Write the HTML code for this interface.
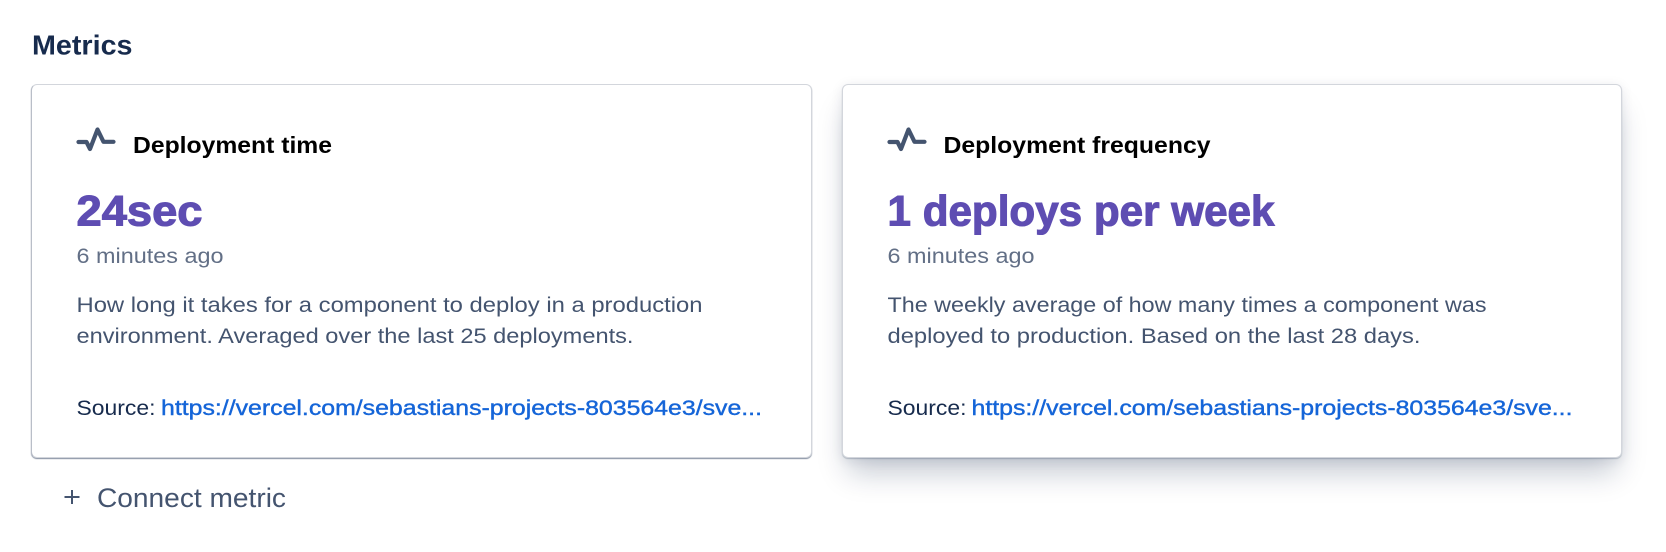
<!DOCTYPE html>
<html>
<head>
<meta charset="utf-8">
<style>
html,body{margin:0;padding:0;background:#fff;width:1666px;height:552px;overflow:hidden}
.card{position:absolute;box-sizing:border-box;background:#fff;border-radius:6px;top:84px;height:374px}
#c1{left:31px;width:781px;border:1px solid #d3d6dc;border-left-color:#b9bec8;box-shadow:0 1px 1px rgba(9,30,66,.5)}
#c2{left:842px;width:780px;border:1px solid #d3d6dc;box-shadow:0 20px 28px -6px rgba(9,30,66,.24),0 2px 12px rgba(9,30,66,.09),0 1px 1px rgba(9,30,66,.22)}
svg{position:absolute;left:0;top:0}
text{font-family:"Liberation Sans",sans-serif}
.h{font-size:23.5px;font-weight:700;fill:#000}
.big{font-size:43px;font-weight:700;fill:#5e4db2;stroke:#5e4db2;stroke-width:1.1px}
.t{font-size:21.5px;fill:#626f86}
.d{font-size:21.5px;fill:#44546f}
.s{font-size:21.5px;fill:#172b4d}
.l{font-size:21.5px;fill:#1565d8;stroke:#1565d8;stroke-width:.4px}
</style>
</head>
<body>
<div class="card" id="c1"></div>
<div class="card" id="c2"></div>
<svg width="1666" height="552" viewBox="0 0 1666 552">
<text x="32" y="54.5" font-size="28" font-weight="700" fill="#172b4d" textLength="100.5" lengthAdjust="spacingAndGlyphs">Metrics</text>

<path d="M78.5 142H86.5L90 149L97.5 129.5L103.5 141.8H113.5" fill="none" stroke="#44546f" stroke-width="4.2" stroke-linecap="round" stroke-linejoin="round"/>
<text class="h" x="133" y="153" textLength="199" lengthAdjust="spacingAndGlyphs">Deployment time</text>
<text class="big" x="76.5" y="225.5" textLength="126" lengthAdjust="spacingAndGlyphs">24sec</text>
<text class="t" x="76.5" y="263" textLength="147" lengthAdjust="spacingAndGlyphs">6 minutes ago</text>
<text class="d" x="76.5" y="312" textLength="626" lengthAdjust="spacingAndGlyphs">How long it takes for a component to deploy in a production</text>
<text class="d" x="76.5" y="343" textLength="557" lengthAdjust="spacingAndGlyphs">environment. Averaged over the last 25 deployments.</text>
<text class="s" x="76.5" y="415" textLength="79" lengthAdjust="spacingAndGlyphs">Source:</text>
<text class="l" x="161" y="415" textLength="601" lengthAdjust="spacingAndGlyphs">https://vercel.com/sebastians-projects-803564e3/sve...</text>

<path d="M889.5 142H897.5L901 149L908.5 129.5L914.5 141.8H924.5" fill="none" stroke="#44546f" stroke-width="4.2" stroke-linecap="round" stroke-linejoin="round"/>
<text class="h" x="943.5" y="153" textLength="267" lengthAdjust="spacingAndGlyphs">Deployment frequency</text>
<text class="big" x="887.5" y="225.5" textLength="387" lengthAdjust="spacingAndGlyphs">1 deploys per week</text>
<text class="t" x="887.5" y="263" textLength="147" lengthAdjust="spacingAndGlyphs">6 minutes ago</text>
<text class="d" x="887.5" y="312" textLength="599" lengthAdjust="spacingAndGlyphs">The weekly average of how many times a component was</text>
<text class="d" x="887.5" y="343" textLength="533" lengthAdjust="spacingAndGlyphs">deployed to production. Based on the last 28 days.</text>
<text class="s" x="887.5" y="415" textLength="79" lengthAdjust="spacingAndGlyphs">Source:</text>
<text class="l" x="971.5" y="415" textLength="601" lengthAdjust="spacingAndGlyphs">https://vercel.com/sebastians-projects-803564e3/sve...</text>

<path d="M72 490V504M64.5 497H79.5" fill="none" stroke="#44546f" stroke-width="2"/>
<text x="97" y="507" font-size="27" fill="#44546f" textLength="189" lengthAdjust="spacingAndGlyphs">Connect metric</text>
</svg>
</body>
</html>
